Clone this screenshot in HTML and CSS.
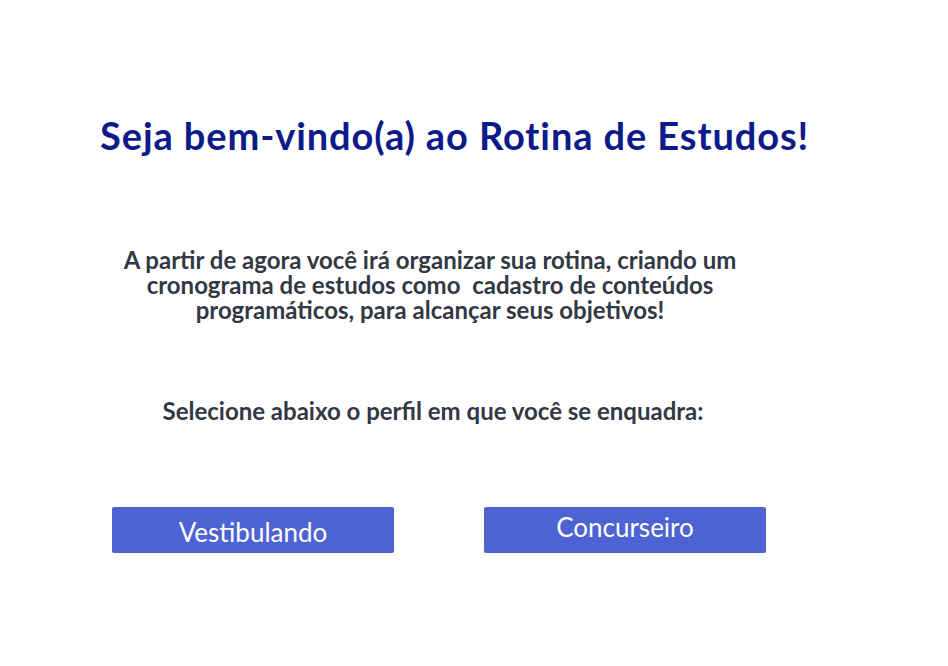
FILE: index.html
```html
<!DOCTYPE html>
<html lang="pt-BR">
<head>
<meta charset="utf-8">
<title>Rotina de Estudos</title>
<link rel="stylesheet" href="styles.css">
</head>
<body>
<main class="page">
  <h1 class="title">Seja bem-vindo(a) ao Rotina de Estudos!</h1>
  <p class="intro">A partir de agora você irá organizar sua rotina, criando um<br>cronograma de estudos como&nbsp; cadastro de conteúdos<br>programáticos, para alcançar seus objetivos!</p>
  <p class="select">Selecione abaixo o perfil em que você se enquadra:</p>
  <div class="buttons">
    <button class="btn btn-low">Vestibulando</button>
    <button class="btn">Concurseiro</button>
  </div>
</main>
</body>
</html>
```

FILE: styles.css
```css
html, body {
  margin: 0;
  padding: 0;
  background: #ffffff;
}
body {
  font-family: Lato, "Open Sans", sans-serif;
  width: 948px;
  height: 666px;
}
.page {
  display: flex;
  flex-direction: column;
  padding-top: 113px;
}
.title {
  margin: 0 0 0 100px;
  font-size: 38px;
  line-height: 44px;
  font-weight: 700;
  letter-spacing: 0.9px;
  color: #0c1a8a;
}
.intro {
  margin: 90px 0 0 100px;
  width: 660px;
  text-align: center;
  font-size: 24px;
  line-height: 25px;
  font-weight: 700;
  color: #323844;
}
.select {
  margin: 76px 0 0 133px;
  width: 600px;
  text-align: center;
  font-size: 24px;
  line-height: 25px;
  font-weight: 700;
  color: #323844;
}
.buttons {
  display: flex;
  gap: 90px;
  margin: 84px 0 0 112px;
}
.btn {
  width: 282px;
  height: 46px;
  border: none;
  border-radius: 2px;
  background: #4d63d3;
  color: #ffffff;
  font-family: Lato, "Open Sans", sans-serif;
  font-size: 26px;
  font-weight: 400;
  padding: 0 0 6px 0;
  cursor: pointer;
}
.btn-low {
  padding: 4px 0 0 0;
}
```
